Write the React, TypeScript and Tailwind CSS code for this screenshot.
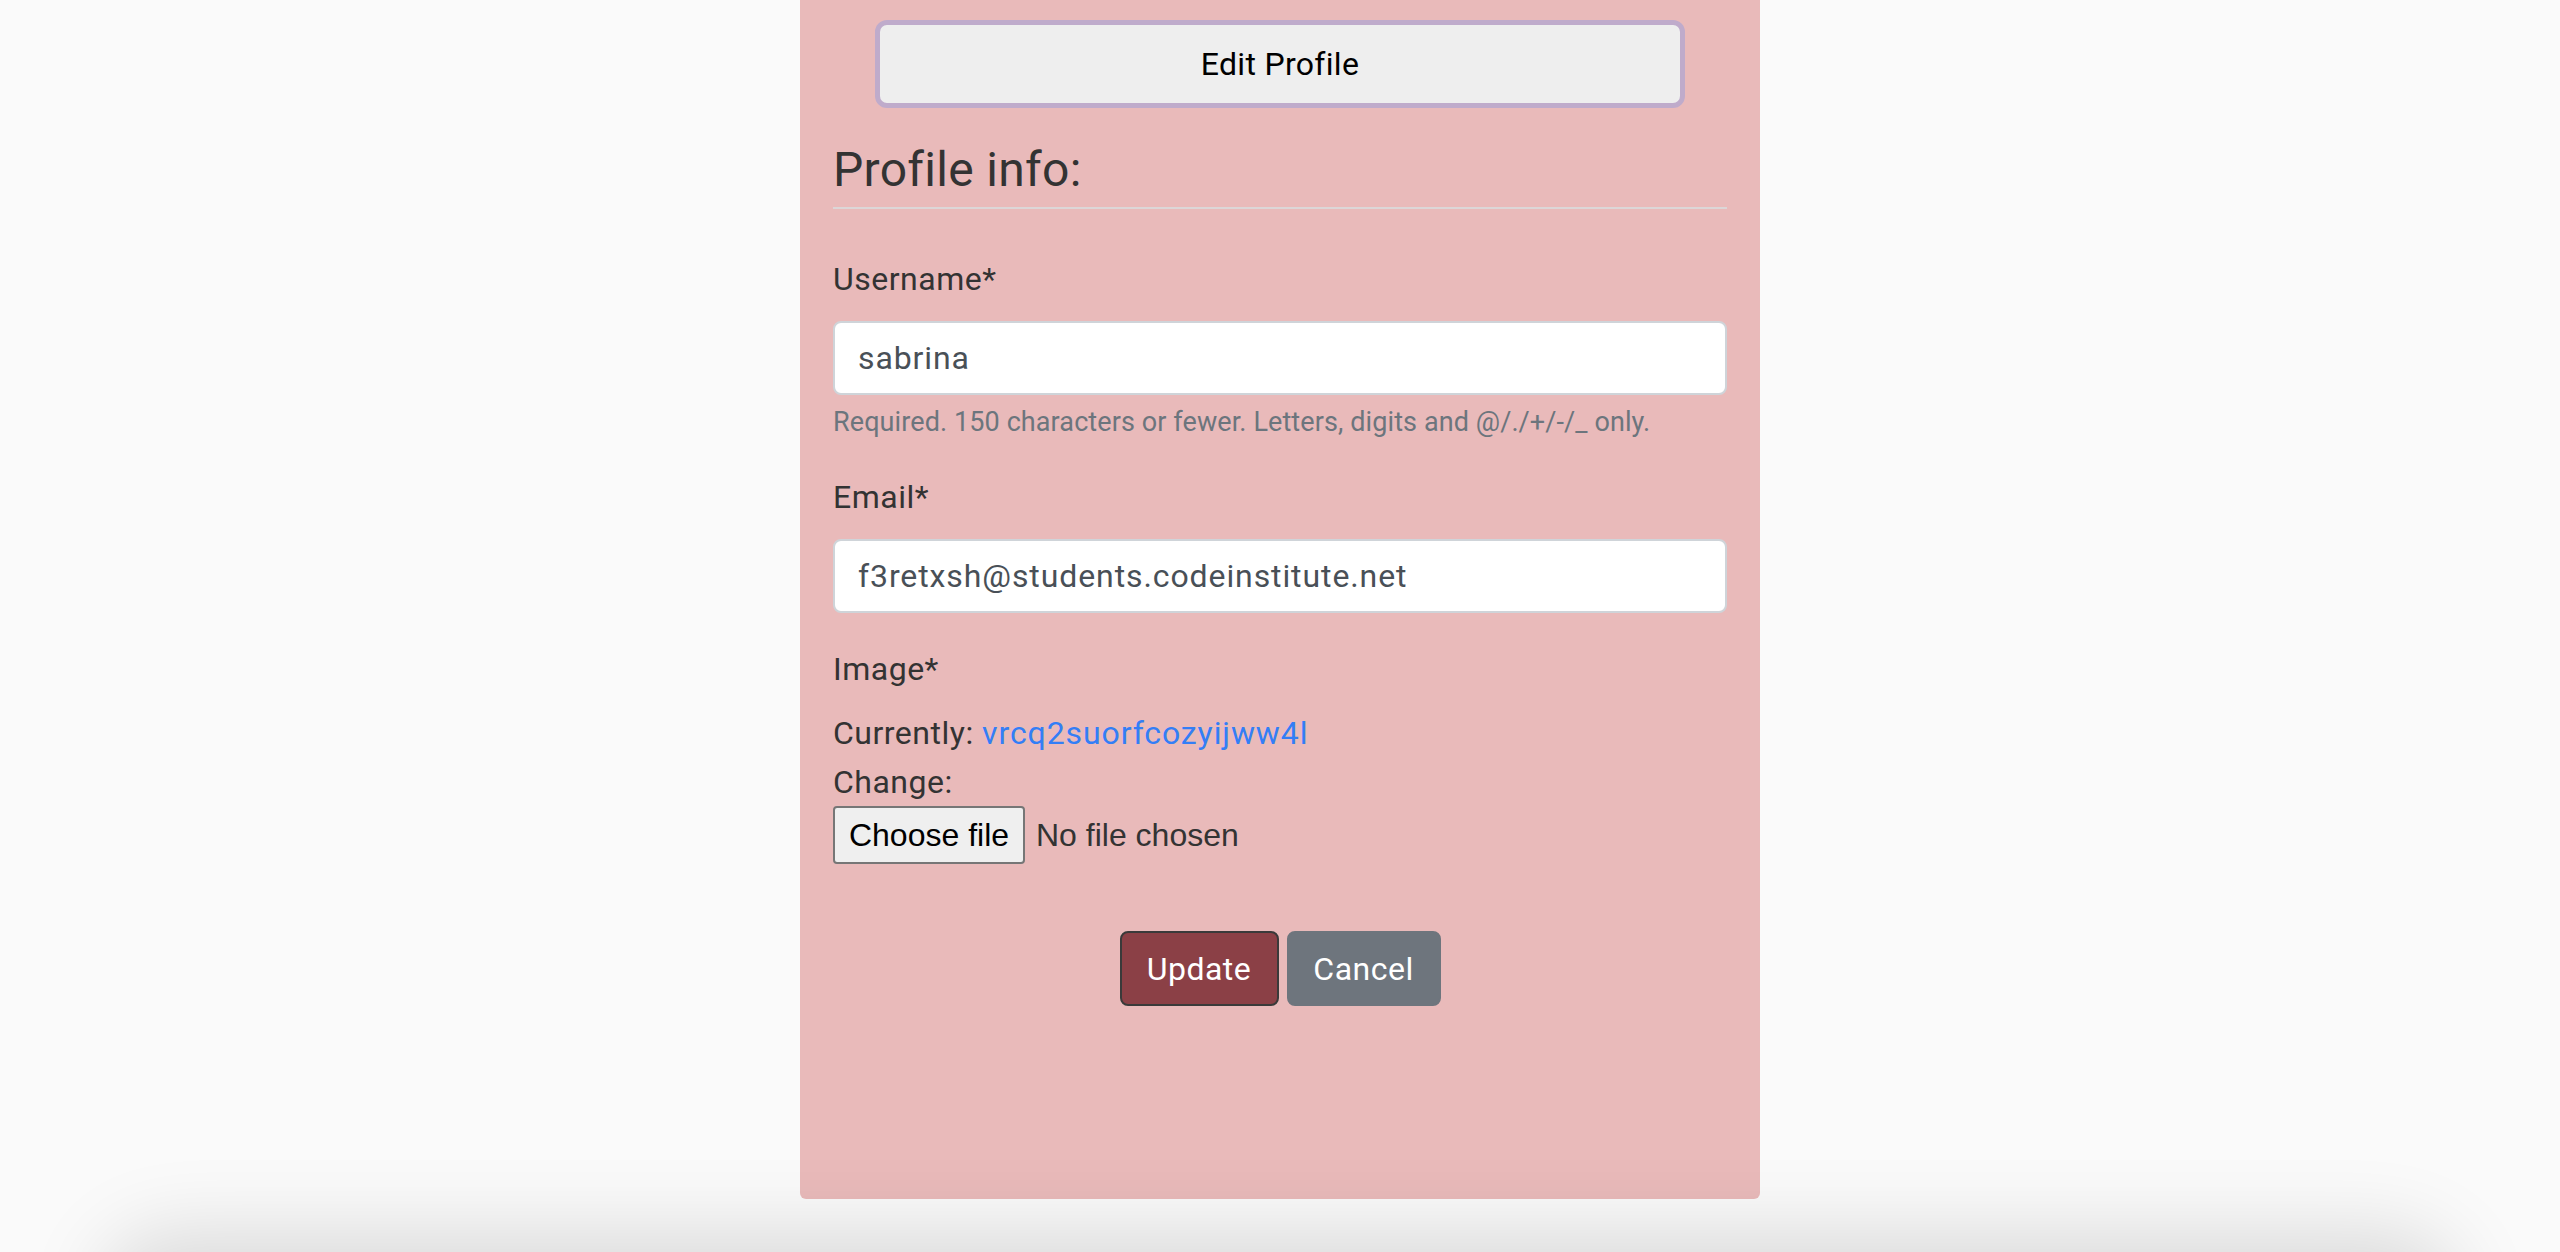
import { useState } from 'react'

const bodyFont = { fontFamily: 'Roboto, "Open Sans", sans-serif' }

function Field({ label, value, help }: { label: string; value: string; help?: string }) {
  return (
    <div>
      <label className="block text-[32px] leading-[48px] tracking-[0.5px] text-[#333333]">{label}</label>
      <input
        value={value}
        readOnly
        className="mt-[18px] block h-[74px] w-full rounded-[8px] border-2 border-[#cfd4d9] bg-white px-[23px] text-[32px] tracking-[0.9px] text-[#495057] outline-none"
      />
      {help && (
        <p className="mt-[6px] text-[27px] leading-[42px] tracking-[0.1px] text-[#6c757d]">{help}</p>
      )}
    </div>
  )
}

export default function App() {
  const [username] = useState('sabrina')
  const [email] = useState('f3retxsh@students.codeinstitute.net')

  return (
    <div className="min-h-[1252px] overflow-hidden bg-[#fafafa]" style={bodyFont}>
      <div className="mx-auto w-[960px] rounded-b-[6px] bg-[#e9baba] px-[33px] pb-[193px]">
        {/* Edit button */}
        <div className="pt-[20px]">
          <button className="mx-auto flex h-[88px] w-[810px] items-center justify-center rounded-[12px] border-[5px] border-[#bfabcb] bg-[#eeeeee] text-[32px] tracking-[0.3px] text-black">
            Edit Profile
          </button>
        </div>

        <h4 className="mt-[33px] text-[48px] leading-[58px] tracking-[0.3px] text-[#333333]">Profile info:</h4>
        <hr className="mt-[8px] border-t-2 border-[#dcd6d7]" />

        <form className="mt-[46px]">
          <Field
            label="Username*"
            value={username}
            help="Required. 150 characters or fewer. Letters, digits and @/./+/-/_ only."
          />

          <div className="mt-[30px]">
            <Field label="Email*" value={email} />
          </div>

          <div className="mt-[32px]">
            <label className="block text-[32px] leading-[48px] tracking-[0.5px] text-[#333333]">Image*</label>
            <div className="mt-[16px] text-[32px] leading-[48px] tracking-[0.5px] text-[#333333]">
              Currently: <a href="#" className="tracking-[0.9px] text-[#337ef6]">vrcq2suorfcozyijww4l</a>
            </div>
            <div className="mt-[1px] text-[32px] leading-[48px] tracking-[0.5px] text-[#333333]">Change:</div>
            <div
              className="flex items-center"
              style={{ fontFamily: '"Liberation Sans", Arial, sans-serif' }}
            >
              <button
                type="button"
                className="flex h-[58px] w-[192px] items-center justify-center rounded-[4px] border-2 border-[#767676] bg-[#efefef] text-[32px] text-black"
              >
                Choose file
              </button>
              <span className="ml-[11px] text-[32px] text-[#333333]">No file chosen</span>
            </div>
          </div>

          <div className="mt-[67px] flex justify-center gap-[8px]">
            <button
              type="button"
              className="h-[75px] w-[159px] rounded-[8px] border-2 border-[#3a3a3a] bg-[#8b4046] text-[32px] tracking-[0.5px] text-white"
            >
              Update
            </button>
            <button
              type="button"
              className="h-[75px] w-[154px] rounded-[8px] border-2 border-[#6e757d] bg-[#6e757d] text-[32px] tracking-[0.5px] text-white"
            >
              Cancel
            </button>
          </div>
        </form>
      </div>

      {/* bottom window shadow */}
      <div className="pointer-events-none fixed bottom-[-100px] left-[120px] right-[120px] h-[100px] rounded-[60px] shadow-[0_0_80px_20px_rgba(0,0,0,0.13)]" />
    </div>
  )
}
